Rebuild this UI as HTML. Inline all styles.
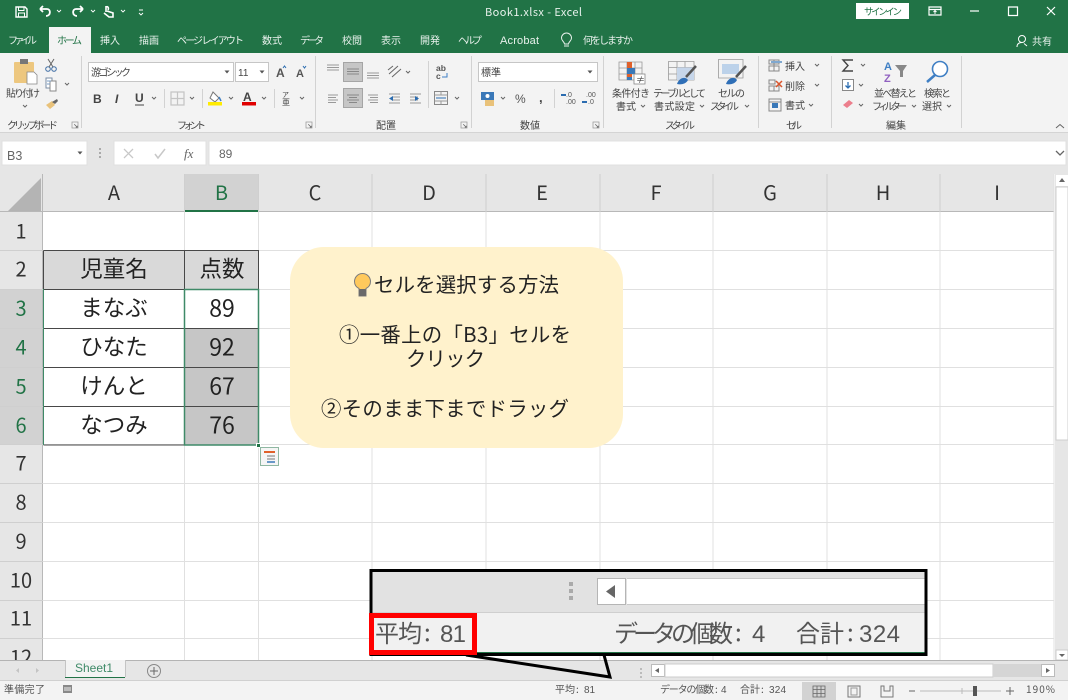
<!DOCTYPE html>
<html lang="ja"><head><meta charset="utf-8"><title>Book1.xlsx - Excel</title>
<style>
html,body{margin:0;padding:0;background:#fff;width:1068px;height:700px;overflow:hidden}
svg{display:block;position:absolute;left:0;top:0}
text{font-family:"Liberation Sans","Noto Sans CJK JP",sans-serif}
.j{font-family:"Noto Sans CJK JP",sans-serif}
.r{font-size:10px;fill:#444;font-family:"Noto Sans CJK JP",sans-serif}
.w{font-size:10px;fill:#e8f1ec;font-family:"Noto Sans CJK JP",sans-serif}
.h{font-size:20px;fill:#333;font-family:"Noto Sans CJK JP",sans-serif;text-anchor:middle}
.g{fill:#217346}
.c{font-size:22.500px;fill:#222;font-family:"Noto Sans CJK JP",sans-serif;text-anchor:middle}
.k{font-size:20.400px;fill:#222;font-family:"Noto Sans CJK JP",sans-serif}
.z{font-size:24px;fill:#555;font-family:"Noto Sans CJK JP",sans-serif}
.y{font-size:24px;fill:#555;font-family:"Liberation Sans",sans-serif}
.s{font-size:10px;fill:#555;font-family:"Noto Sans CJK JP",sans-serif}
</style></head><body>
<svg width="1068" height="700" viewBox="0 0 1068 700" xmlns="http://www.w3.org/2000/svg">
<defs>
<path id="v" d="M-2-1 0 1 2-1" fill="none" stroke="#666" stroke-width="1"/>
<path id="dn" d="M-2.5-1.5H2.5L0 1.5Z" fill="#555"/>
<g id="l"><path d="M-4-4H4V4H-4Z" fill="none" stroke="#999" stroke-width="1"/><path d="M-1-1 3 3M1 3H3V1" fill="none" stroke="#666" stroke-width="1"/></g>
</defs>

<!-- base -->
<rect width="1068" height="700" fill="#fff"/>
<rect width="1068" height="53" fill="#217346"/>
<rect y="53" width="1068" height="79" fill="#f3f3f3"/>
<rect y="132" width="1068" height="42" fill="#e6e6e6"/>
<rect y="132" width="1068" height="1" fill="#d4d4d4"/>

<!-- QAT -->
<g fill="none" stroke="#fff" stroke-width="1.4">
<path d="M16 7H25L27 9V17H16Z"/><path d="M18.500 7V10.500H24V7M18.500 17V13H24.500V17" stroke-width="1"/>
<path d="M40 9 43 6M40 9 43 12M40 9H47C51 9 51 16 46 16" stroke-width="1.800"/>
<path d="M83 9 80 6M83 9 80 12M83 9H76C72 9 72 16 77 16" stroke-width="1.800"/>
<path d="M106 6V12M106 7C108 6 109 8 108 10M104 13 109 17H113V13L107 11" stroke-width="1.600"/>
</g>
<g fill="none" stroke="#fff" stroke-width=".9"><path d="M57 10 59 12 61 10M91 10 93 12 95 10M121 10 123 12 125 10M139 10H143M139 13 141 15 143 13"/></g>
<text class="w" x="485" y="16" style="font-size:11px" textLength="97">Book1.xlsx  -  Excel</text>
<rect x="856" y="3" width="53" height="16" fill="#fff"/>
<text x="864" y="15" class="r" style="fill:#217346;font-size:9.500px" textLength="38">サインイン</text>
<g fill="none" stroke="#fff" stroke-width="1.200">
<path d="M929 7H941V15H929ZM929 9.500H941"/><path d="M935 14V11M933.500 12 935 10.500 936.500 12" stroke-width="1"/>
<path d="M970 11H979" stroke-width="1.200"/><path d="M1008.500 7H1017.500V15.500H1008.500Z"/><path d="M1047 7 1055 15M1055 7 1047 15"/>
<circle cx="1022" cy="39" r="3.500" stroke-width="1"/><path d="M1017 47C1017 43 1020 42.500 1022 42.500M1024 43.500 1027 46" stroke-width="1"/>
</g>

<!-- tabs -->
<rect x="49" y="27" width="42" height="27" fill="#f3f3f3"/>
<text class="w" x="8" y="44" textLength="29">ファイル</text>
<text class="r g" x="57" y="44" style="fill:#217346" textLength="25">ホーム</text>
<text class="w" x="100" y="44" textLength="20">挿入</text>
<text class="w" x="139" y="44" textLength="20">描画</text>
<text class="w" x="177" y="44" textLength="67">ページ レイアウト</text>
<text class="w" x="262" y="44" textLength="20">数式</text>
<text class="w" x="300" y="44" textLength="24">データ</text>
<text class="w" x="342" y="44" textLength="20">校閲</text>
<text class="w" x="381" y="44" textLength="20">表示</text>
<text class="w" x="420" y="44" textLength="20">開発</text>
<text class="w" x="458" y="44" textLength="24">ヘルプ</text>
<text class="w" x="500" y="44" style="font-family:'Liberation Sans';font-size:11px" textLength="39">Acrobat</text>
<path d="M564 46H569M564.500 44C564 41 561.500 41 561.500 38A5 5 0 0 1 571.500 38C571.500 41 569 41 568.500 44Z" fill="none" stroke="#e8f1ec" stroke-width="1"/>
<text class="w" x="583" y="44" textLength="50">何をしますか</text>
<text class="w" x="1032" y="45" textLength="20">共有</text>

<!-- ribbon separators -->
<g fill="#d2d2d2"><rect x="81" y="56" width="1" height="72"/><rect x="315" y="56" width="1" height="72"/><rect x="471" y="56" width="1" height="72"/><rect x="603" y="56" width="1" height="72"/><rect x="758" y="56" width="1" height="72"/><rect x="831" y="56" width="1" height="72"/><rect x="961" y="56" width="1" height="72"/>
<rect x="164" y="89" width="1" height="19"/><rect x="202" y="89" width="1" height="19"/><rect x="274" y="89" width="1" height="19"/><rect x="428" y="61" width="1" height="47"/><rect x="554" y="89" width="1" height="19"/></g>

<!-- clipboard -->
<rect x="14" y="62" width="20" height="21" rx="1" fill="#edc77f"/>
<rect x="20" y="59" width="8" height="5" fill="#777"/>
<path d="M27 72H34L37 75V84H27Z" fill="#fff" stroke="#888" stroke-width=".8"/>
<text class="r" x="6" y="97" textLength="34">貼り付け</text>
<use href="#v" x="25" y="106"/>
<g fill="none" stroke="#3f6ea5" stroke-width="1"><circle cx="48" cy="69" r="2.300"/><circle cx="54" cy="69" r="2.300"/><path d="M49 67 54 59M53 67 48 59" stroke="#666"/></g>
<path d="M46 78H52V88H46Z" fill="#fff" stroke="#7a8ca5"/><path d="M50 81H56V91H50Z" fill="#fff" stroke="#888"/><path d="M47 81H51M47 84H50" stroke="#7a9cc5"/>
<use href="#v" x="67" y="84"/>
<path d="M46 105 52 101 55 105 50 109Z" fill="#e9c27a"/><path d="M52 102 57 99 58 101 55 104Z" fill="#666"/>
<text class="r" x="7" y="129" textLength="51">クリップボード</text>
<use href="#l" x="75" y="125" transform="translate(18.750 31.250) scale(.75)"/>

<!-- font -->
<rect x="88.500" y="62.500" width="145" height="19" fill="#fff" stroke="#c6c6c6"/>
<rect x="235.500" y="62.500" width="33" height="19" fill="#fff" stroke="#c6c6c6"/>
<text class="r" x="91" y="76" textLength="40">游ゴシック</text>
<text class="r" x="238" y="76" style="font-family:'Liberation Sans'" font-size="10">11</text>
<use href="#dn" x="227" y="72"/><use href="#dn" x="262" y="72"/>
<text x="276" y="77" font-size="12" fill="#555" font-weight="bold">A</text><text x="296" y="77" font-size="11" fill="#555" font-weight="bold">A</text>
<path d="M283 68 284.500 66 286 68" fill="none" stroke="#2b6cb0"/><path d="M303 66 304.500 68 306 66" fill="none" stroke="#2b6cb0"/>
<text x="93" y="103" font-size="12" font-weight="bold" fill="#444">B</text>
<text x="115" y="103" font-size="12" font-weight="bold" font-style="italic" fill="#444">I</text>
<text x="135" y="102" font-size="12" font-weight="bold" fill="#444">U</text><path d="M135 105H144" stroke="#444"/>
<use href="#v" x="154" y="98"/>
<path d="M171 92H184V105H171ZM177.500 92V105M171 98.500H184" fill="none" stroke="#c4c4c4" stroke-width="1.200"/>
<use href="#v" x="192" y="98"/>
<path d="M213 92 219 98 215 102 210 98Z" fill="#fff" stroke="#777"/><path d="M219 97 221 101" stroke="#3f7fc4" stroke-width="1.500"/>
<rect x="208" y="102" width="14" height="3.500" fill="#ffeb00"/>
<use href="#v" x="231" y="98"/>
<text x="243" y="101" font-size="12" font-weight="bold" fill="#444">A</text>
<rect x="242" y="102" width="14" height="3.500" fill="#e00000"/>
<use href="#v" x="264" y="98"/>
<text class="r" x="282" y="97" style="font-size:7px" textLength="8">ア</text><text class="r" x="282" y="105" style="font-size:8px" textLength="8">亜</text>
<use href="#v" x="302" y="98"/>
<text class="r" x="177" y="129" textLength="29">フォント</text>
<use href="#l" x="309" y="125" transform="translate(77.250 31.250) scale(.75)"/>

<!-- align -->
<rect x="343.500" y="62.500" width="19" height="19" fill="#c6c6c6" stroke="#a5a5a5"/>
<rect x="343.500" y="88.500" width="19" height="19" fill="#c6c6c6" stroke="#a5a5a5"/>
<g stroke="#999" stroke-width="1" fill="none">
<path d="M327 65H339M327 67.500H339M327 70H339"/><path d="M347 69H359M347 71.500H359M347 74H359" stroke="#888"/><path d="M367 73H379M367 75.500H379M367 78H379"/>
<path d="M328 95H338M328 97.500H336M328 100H338M328 102.500H336"/><path d="M347 95H359M349 97.500H357M347 100H359M349 102.500H357" stroke="#888"/><path d="M368 95H378M370 97.500H378M368 100H378M370 102.500H378"/>
<path d="M389 94H400M392 97H400M392 100H400M389 103H400"/><path d="M410 94H421M410 97H418M410 100H418M410 103H421"/>
<path d="M389 74 398 66M392 77 401 69" stroke="#666"/><path d="M388 70 393 66" stroke="#666"/>
</g>
<path d="M393 96V101L389 98.500ZM415 96V101L419 98.500Z" fill="#2b6cb0"/>
<use href="#v" x="408" y="72"/>
<text x="436" y="71" font-size="8.500" font-weight="bold" fill="#555">ab</text><text x="436" y="79" font-size="8.500" font-weight="bold" fill="#555">c</text>
<path d="M447 73V77H442" fill="none" stroke="#3f7fc4"/>
<rect x="434.500" y="91.500" width="13" height="13" fill="#f3f3f3" stroke="#888"/><path d="M436 98H446" stroke="#2b6cb0"/><path d="M434.500 95H447.500M434.500 101H447.500M441 91.500V95M441 101V104.500" stroke="#999"/>
<use href="#v" x="457" y="98"/>
<text class="r" x="376" y="129" textLength="20">配置</text>
<use href="#l" x="464" y="125" transform="translate(116 31.250) scale(.75)"/>

<!-- number -->
<rect x="478.500" y="62.500" width="119" height="19" fill="#fff" stroke="#c6c6c6"/>
<text class="r" x="481" y="76" textLength="20">標準</text><use href="#dn" x="590" y="72"/>
<rect x="481" y="92" width="13" height="8" fill="#3a78b8"/><circle cx="487.500" cy="96" r="2" fill="#fff"/><rect x="485" y="100" width="9" height="6" fill="#e9c27a"/>
<use href="#v" x="503" y="98"/>
<text x="515" y="103" font-size="12" fill="#555">%</text>
<text x="539" y="102" font-size="13" font-weight="bold" fill="#444">,</text>
<text x="566" y="97" font-size="7" fill="#555">.0</text><text x="566" y="104" font-size="7" fill="#555">.00</text>
<text x="586" y="97" font-size="7" fill="#555">.00</text><text x="588" y="104" font-size="7" fill="#555">.0</text>
<path d="M561 95H566M582 102H587" stroke="#2b6cb0" stroke-width="2"/>
<text class="r" x="520" y="129" textLength="20">数値</text>
<use href="#l" x="596" y="125" transform="translate(149 31.250) scale(.75)"/>

<!-- styles -->
<g fill="none" stroke="#999" stroke-width=".8"><path d="M619 62H642V80H619ZM627 62V80M635 62V80M619 68H642M619 74H642"/>
<path d="M668.500 61.500H694V80H668.500ZM677 61.500V80M685 61.500V80M668.500 67.500H694M668.500 74H694"/>
<path d="M718.500 59.500H743V78H718.500Z"/></g>
<path d="M627 62H632V68H635V74H632V80H627Z" fill="#e0602a"/><path d="M627 68H635V74H627Z" fill="#3a78b8"/><path d="M627 77H632V80H627Z" fill="#3a78b8"/>
<rect x="634" y="74" width="11" height="10" fill="#fff" stroke="#888" stroke-width=".8"/><text x="636" y="83" font-size="9" fill="#444" class="j">≠</text>
<rect x="677" y="67.500" width="17" height="12.500" fill="#c6d6ea"/>
<rect x="722" y="64" width="17" height="10" fill="#bcd2ea"/>
<path d="M696 66 686 77" stroke="#555" stroke-width="2.500"/><path d="M746 66 736 77" stroke="#555" stroke-width="2.500"/>
<path d="M677 84C679 78 685 76 688 80 686 84 681 85 677 84ZM726 84C728 78 734 76 737 80 735 84 730 85 726 84Z" fill="#2f6fb7"/>
<text class="r" x="612" y="97" textLength="38">条件付き</text><text class="r" x="616" y="110" textLength="20">書式</text><use href="#v" x="643" y="106"/>
<text class="r" x="653" y="97" textLength="53">テーブルとして</text><text class="r" x="654" y="110" textLength="41">書式設定</text><use href="#v" x="702" y="106"/>
<text class="r" x="718" y="97" textLength="27">セルの</text><text class="r" x="710" y="110" textLength="29">スタイル</text><use href="#v" x="747" y="106"/>
<text class="r" x="665" y="129" textLength="30">スタイル</text>

<!-- cells -->
<g fill="none" stroke="#888" stroke-width="1"><path d="M769 60H779V64H769ZM769 66H779V71H769ZM774 60V71"/><path d="M769 80H775V84H769ZM769 86H779V91H769ZM774 86V91"/><path d="M769 99H781V111H769ZM769 102H781"/></g>
<path d="M771 61H782V63H771Z" fill="#7fa8d0"/><path d="M776 81 782 87M782 81 776 87" stroke="#d9542b" stroke-width="1.500"/><rect x="772" y="103" width="6" height="5" fill="#3a78b8"/>
<text class="r" x="785" y="70" textLength="20">挿入</text><use href="#v" x="817" y="65"/>
<text class="r" x="785" y="90" textLength="20">削除</text><use href="#v" x="817" y="85"/>
<text class="r" x="785" y="109" textLength="20">書式</text><use href="#v" x="811" y="105"/>
<text class="r" x="786" y="129" textLength="16">セル</text>

<!-- edit -->
<path d="M853 60H843L848 65.500 843 71H853" fill="none" stroke="#444" stroke-width="1.400"/><use href="#v" x="863" y="65"/>
<rect x="842.500" y="79.500" width="11" height="11" fill="#fff" stroke="#888"/><path d="M848 82V88M845.500 85.500 848 88 850.500 85.500" fill="none" stroke="#2b6cb0" stroke-width="1.300"/><use href="#v" x="861" y="85"/>
<path d="M843 105 849 100 853 103 847 108Z" fill="#ec7e8c"/><use href="#v" x="861" y="105"/>
<text x="884" y="70" font-size="11" font-weight="bold" fill="#3f7fc4">A</text><text x="884" y="82" font-size="11" font-weight="bold" fill="#9060c0">Z</text>
<path d="M895 65H907L903 71V77H900V71Z" fill="#888"/>
<circle cx="940" cy="69" r="7.500" fill="#fff" stroke="#3f7fc4" stroke-width="1.600"/><path d="M935 75 927 82" stroke="#3f7fc4" stroke-width="2.500"/>
<text class="r" x="874" y="97" textLength="43">並べ替えと</text><text class="r" x="872" y="110" textLength="35">フィルター</text><use href="#v" x="914" y="106"/>
<text class="r" x="924" y="97" textLength="27">検索と</text><text class="r" x="922" y="110" textLength="20">選択</text><use href="#v" x="949" y="106"/>
<text class="r" x="886" y="129" textLength="20">編集</text>
<path d="M1056 128 1060 124.500 1064 128" fill="none" stroke="#666"/>

<!-- formula bar -->
<rect x="2" y="141" width="85" height="24" fill="#fff" stroke="#e0e0e0"/>
<text x="7" y="160" font-size="12.500" fill="#666">B3</text><use href="#dn" x="80" y="153"/>
<g fill="#aaa"><rect x="99" y="148" width="2" height="2"/><rect x="99" y="152" width="2" height="2"/><rect x="99" y="156" width="2" height="2"/></g>
<rect x="114" y="141" width="92" height="24" fill="#fff" stroke="#e0e0e0"/>
<rect x="209" y="141" width="857" height="24" fill="#fff" stroke="#e0e0e0"/>
<path d="M124 149 133 158M133 149 124 158" stroke="#c8c8c8" stroke-width="1.300"/>
<path d="M155 154 158 158 165 149" fill="none" stroke="#c8c8c8" stroke-width="1.500"/>
<text x="184" y="158" font-size="13" font-style="italic" style="font-family:'Liberation Serif'" fill="#666">fx</text>
<text x="219" y="158" font-size="12" fill="#666">89</text>
<path d="M1056 151 1060 155 1064 151" fill="none" stroke="#666" stroke-width="1.300"/>

<!-- grid -->
<rect x="0" y="166" width="1068" height="8" fill="#e6e6e6"/>
<rect x="0" y="174" width="1054" height="38" fill="#e6e6e6"/>
<rect x="0" y="212" width="43" height="448" fill="#e6e6e6"/>
<rect x="184" y="174" width="74" height="38" fill="#d2d2d2"/>
<rect x="0" y="289" width="43" height="156" fill="#d2d2d2"/>
<path d="M8 211H41V178Z" fill="#b4b4b4"/>
<rect x="0" y="211" width="1054" height="1" fill="#b8b8b8"/><rect x="42" y="174" width="1" height="486" fill="#b8b8b8"/>
<rect x="184" y="210" width="75" height="2" fill="#217346"/>
<g stroke="#e0e0e0" stroke-width="1" fill="none">
<path d="M184.500 212V660M258.500 212V660M372 212V660M486 212V660M600 212V660M713 212V660M827 212V660M940 212V660M1054 174V660"/>
<path d="M43 250.500H1054M43 289.500H1054M43 328.500H1054M43 367.500H1054M43 406.500H1054M43 444.500H1054M43 483.500H1054M43 522.500H1054M43 561.500H1054M43 600.500H1054M43 638.500H1054"/>
<path d="M184.500 174V212M258.500 174V212M372 174V212M486 174V212M600 174V212M713 174V212M827 174V212M940 174V212"  stroke="#cfcfcf"/>
<path d="M0 250.500H43M0 289.500H43M0 328.500H43M0 367.500H43M0 406.500H43M0 444.500H43M0 483.500H43M0 522.500H43M0 561.500H43M0 600.500H43M0 638.500H43" stroke="#cfcfcf"/>
</g>
<text class="h" x="114" y="200">A</text><text class="h g" x="221.500" y="200" style="fill:#217346">B</text>
<text class="h" x="315" y="200">C</text><text class="h" x="429" y="200">D</text><text class="h" x="542" y="200">E</text><text class="h" x="656" y="200">F</text><text class="h" x="770" y="200">G</text><text class="h" x="883" y="200">H</text><text class="h" x="997" y="200">I</text>
<text class="h" x="21" y="238.500">1</text><text class="h" x="21" y="276.500">2</text><text class="h g" x="21" y="315.500" style="fill:#217346">3</text><text class="h g" x="21" y="354.500" style="fill:#217346">4</text><text class="h g" x="21" y="393.500" style="fill:#217346">5</text><text class="h g" x="21" y="432.500" style="fill:#217346">6</text><text class="h" x="21" y="470.500">7</text><text class="h" x="21" y="509.500">8</text><text class="h" x="21" y="548.500">9</text><text class="h" x="21" y="587.500">10</text><text class="h" x="21" y="625.500">11</text><text class="h" x="21" y="664.500">12</text>

<!-- table -->
<rect x="44" y="251" width="214" height="38" fill="#d9d9d9"/>
<rect x="185" y="329" width="73" height="116" fill="#c6c6c6"/>
<path d="M43.500 250.500H258.500V289M43.500 250.500V289M184.500 250.500V445M43.500 289.500H184M43.500 328.500H258M43.500 367.500H258M43.500 406.500H258M43.500 445H184" fill="none" stroke="#484848" stroke-width="1"/>
<path d="M43.500 289V445" stroke="#3f8a68" stroke-width="1"/>
<rect x="184.500" y="289.500" width="74" height="155.500" fill="none" stroke="#3f8a68" stroke-width="1.500"/>
<rect x="256.500" y="443.500" width="4" height="4" fill="#217346" stroke="#fff"/>
<text class="c" x="114" y="277">児童名</text><text class="c" x="222" y="277">点数</text>
<text class="c" x="114" y="316">まなぶ</text><text class="c" x="222" y="316.500" style="font-size:23px">89</text>
<text class="c" x="114" y="355">ひなた</text><text class="c" x="222" y="355.500" style="font-size:23px">92</text>
<text class="c" x="114" y="394">けんと</text><text class="c" x="222" y="394.500" style="font-size:23px">67</text>
<text class="c" x="114" y="433">なつみ</text><text class="c" x="222" y="433.500" style="font-size:23px">76</text>
<rect x="260.500" y="447.500" width="18" height="18" fill="#f5f5f5" stroke="#8fb7a2"/>
<path d="M264 452H275" stroke="#e0602a" stroke-width="2"/><path d="M267 456H275M267 459H275" stroke="#777"/><path d="M267 462H275" stroke="#3a78b8" stroke-width="1.500"/>

<!-- callout -->
<rect x="290" y="247" width="333" height="201" rx="34" fill="#fff2cc"/>
<path d="M359 296H366V288.500C369 287 370.500 284.500 370.500 281.500A8 8 0 0 0 354.500 281.500C354.500 284.500 356 287 359 288.500Z" fill="#ffc95c" stroke="#7c7c7c" stroke-width="1"/><rect x="359" y="289" width="7" height="7" rx="1" fill="#6a6a6a"/>
<text class="k" x="374" y="292" textLength="185">セルを選択する方法</text>
<text class="k" x="339" y="342" textLength="232">①一番上の「B3」セルを</text>
<text class="k" x="406" y="366" textLength="79">クリック</text>
<text class="k" x="321" y="416" textLength="248">②そのまま下までドラッグ</text>

<!-- scrollbar -->
<rect x="1055" y="174" width="13" height="486" fill="#e6e6e6"/>
<rect x="1056" y="187" width="12" height="253" fill="#fff" stroke="#cfcfcf"/>
<rect x="1056" y="175" width="12" height="11" fill="#fff"/><path d="M1059 182 1062 178 1065 182Z" fill="#666"/>
<rect x="1056" y="650" width="12" height="10" fill="#fff" stroke="#ccc"/><path d="M1059 654 1062 657 1065 654Z" fill="#666"/>

<!-- tabs bar -->
<rect x="0" y="660" width="1068" height="20" fill="#e6e6e6"/>
<rect x="0" y="660" width="1068" height="1" fill="#b4b4b4"/>
<path d="M19 668V673L16 670.500ZM36 668V673L39 670.500Z" fill="#c4c4c4"/>
<rect x="65" y="660" width="60" height="17" fill="#f3f3f3"/>
<rect x="65" y="677" width="60" height="1" fill="#217346"/><rect x="65" y="660" width="1" height="17" fill="#c4c4c4"/><rect x="125" y="660" width="1" height="17" fill="#c4c4c4"/>
<text x="75" y="672" font-size="12" fill="#3f8a68">Sheet1</text>
<circle cx="154" cy="671" r="6.500" fill="none" stroke="#888"/><path d="M150 671H158M154 667V675" stroke="#666"/>
<g fill="#bbb"><rect x="640" y="668" width="2" height="2"/><rect x="640" y="672" width="2" height="2"/><rect x="640" y="676" width="2" height="2"/></g>
<rect x="651.500" y="664.500" width="13" height="12" fill="#fff" stroke="#bbb"/><path d="M659 668V673L655 670.500Z" fill="#666"/>
<rect x="665" y="664" width="328" height="13" fill="#fff" stroke="#ccc"/>
<rect x="993" y="664" width="48" height="13" fill="#d5d5d5"/>
<rect x="1041.500" y="664.500" width="13" height="12" fill="#fff" stroke="#bbb"/><path d="M1046 668V673L1050 670.500Z" fill="#666"/>

<!-- status -->
<rect x="0" y="680" width="1068" height="20" fill="#f3f3f3"/>
<rect x="0" y="680" width="1068" height="1" fill="#d0d0d0"/>
<text class="s" x="4" y="693" textLength="41">準備完了</text>
<rect x="63" y="685" width="9" height="8" fill="#888"/><path d="M64 688H71M64 690H71" stroke="#eee"/>
<text class="s" x="555" y="693" textLength="20">平均</text><text class="s" x="576" y="693">:</text><text class="s" x="584" y="693" textLength="11" style="font-family:'Liberation Sans'">81</text>
<text class="s" x="660" y="693" textLength="54">データの個数</text><text class="s" x="715" y="693">:</text><text class="s" x="721" y="693" style="font-family:'Liberation Sans'">4</text>
<text class="s" x="740" y="693" textLength="20">合計</text><text class="s" x="761" y="693">:</text><text class="s" x="769" y="693" textLength="17" style="font-family:'Liberation Sans'">324</text>
<rect x="802" y="682" width="34" height="18" fill="#d2d2d2"/>
<path d="M813 686H825V697H813ZM817 686V697M821 686V697M813 689.500H825M813 693.500H825" fill="none" stroke="#666" stroke-width=".8"/>
<path d="M848 686H860V697H848Z" fill="none" stroke="#777"/><path d="M851 688H857V695H851Z" fill="none" stroke="#999"/>
<path d="M881 686V697H893V686H890V691H884V686Z" fill="none" stroke="#777"/>
<path d="M909 691H915M1006 691H1014M1010 687V695" stroke="#666"/><path d="M920 691H1001M962 688V694" stroke="#bbb"/><rect x="973" y="686" width="4" height="10" fill="#555"/>
<text class="s" x="1026" y="693" textLength="29">190%</text>

<!-- zoomed callout -->
<path d="M466 655 610 677 604 655" fill="none" stroke="#000" stroke-width="3"/>
<rect x="371" y="571" width="555" height="42" fill="#e2e2e2"/>
<rect x="371" y="613" width="555" height="41" fill="#f1f1f1"/>
<rect x="371" y="612" width="555" height="1" fill="#cfcfcf"/>
<rect x="476" y="652" width="450" height="2" fill="#217346"/>
<g fill="#aaa"><rect x="569" y="582" width="4" height="4"/><rect x="569" y="589" width="4" height="4"/><rect x="569" y="596" width="4" height="4"/></g>
<rect x="597.500" y="578.500" width="28" height="26" fill="#fff" stroke="#b5b5b5"/>
<rect x="627" y="578" width="298" height="27" fill="#fff"/><path d="M627 578.500H925M627 604.500H925" stroke="#c8c8c8"/>
<path d="M615 585V598L606 591.500Z" fill="#666"/>
<text class="z" x="375" y="642" textLength="47">平均</text><text class="z" x="424" y="641">:</text><text class="y" x="440" y="642" textLength="26">81</text>
<text class="z" x="614" y="642" textLength="119">データの個数</text><text class="z" x="735" y="641">:</text><text class="y" x="752" y="642">4</text>
<text class="z" x="796" y="642" textLength="48">合計</text><text class="z" x="847" y="641">:</text><text class="y" x="859" y="642" textLength="41">324</text>
<rect x="371" y="570.500" width="555" height="84" fill="none" stroke="#000" stroke-width="3"/>
<rect x="371.500" y="615.500" width="103" height="37" fill="none" stroke="#f00" stroke-width="5"/>
</svg>
</body></html>
